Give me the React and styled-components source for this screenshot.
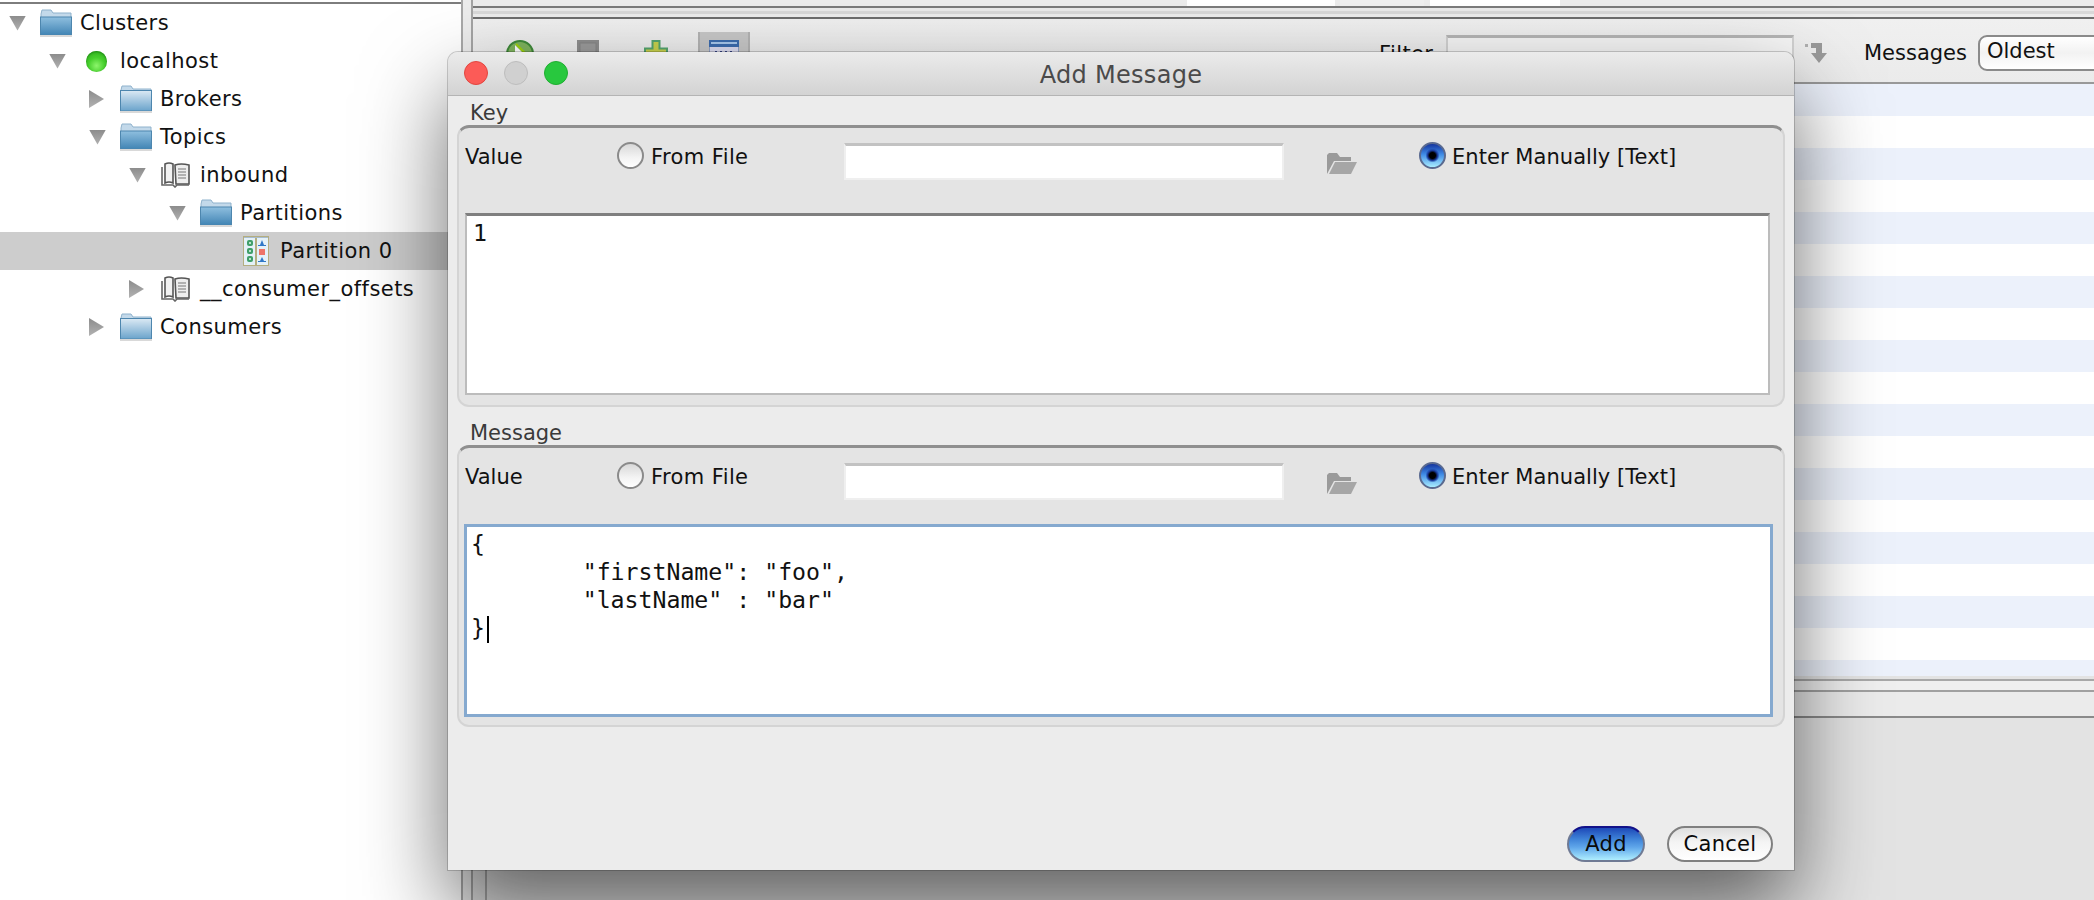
import styled, { createGlobalStyle } from 'styled-components';

const treeRows = [
	{ depth: 0, arrow: 'down', icon: 'folderOpen', label: 'Clusters' },
	{ depth: 1, arrow: 'down', icon: 'ball', label: 'localhost' },
	{ depth: 2, arrow: 'right', icon: 'folder', label: 'Brokers' },
	{ depth: 2, arrow: 'down', icon: 'folderOpen', label: 'Topics' },
	{ depth: 3, arrow: 'down', icon: 'book', label: 'inbound' },
	{ depth: 4, arrow: 'down', icon: 'folderOpen', label: 'Partitions' },
	{ depth: 5, icon: 'partition', label: 'Partition 0', selected: true },
	{ depth: 3, arrow: 'right', icon: 'book', label: '__consumer_offsets' },
	{ depth: 2, arrow: 'right', icon: 'folder', label: 'Consumers' },
];

const tableRows = Array.from({ length: 19 }, (_, i) => i);

const FolderIcon = ({ open }) => {
	const id = open ? 'folderOpenFill' : 'folderFill';
	return (
		<svg width='32' height='28' viewBox='0 0 32 28'>
			<defs>
				<linearGradient id={id} x1='0' y1='0' x2='0' y2='1'>
					<stop offset='0' stopColor={open ? '#8fbfdf' : '#dbe9f4'} />
					<stop offset='1' stopColor={open ? '#4184b4' : '#6aa3cb'} />
				</linearGradient>
			</defs>
			<path d='M1 5 L2 1 H11 L13 4 H31 V10 H1 Z' fill='#c3d9ea' stroke='#8fb2cc' strokeWidth='1' />
			<rect x='0.5' y={open ? 8 : 5.5} width='31' height={open ? 18 : 20.5} fill={`url(#${id})`} stroke='#4d86ae' strokeWidth='1' />
			<rect x='0' y='26' width='32' height='2' fill='#d9d9d9' />
		</svg>
	);
};

const BookIcon = () => (
	<svg width='30' height='26' viewBox='0 0 30 26'>
		<path d='M4 2 Q8 0 12 2 V21 Q8 19 4 21 Z' fill='#f2f2f2' stroke='#555' strokeWidth='1.6' />
		<path d='M14 3 Q20 1 28 3 V22 H15 Z' fill='#eeeeee' stroke='#555' strokeWidth='1.6' />
		<path d='M17 7 H25 M17 10 H25 M17 13 H25 M17 16 H25' stroke='#777' strokeWidth='1.2' />
		<path d='M1 5 V23 H12 L14 25 L16 23 H28' fill='none' stroke='#666' strokeWidth='1.6' />
	</svg>
);

const PartitionIcon = () => (
	<svg width='26' height='30' viewBox='0 0 26 30'>
		<rect x='0.5' y='0.5' width='25' height='29' fill='#e4f1f8' stroke='#b4ae80' />
		<rect x='12' y='1' width='2' height='28' fill='#b4ae80' />
		<rect x='1' y='1' width='24' height='1' fill='#a7bcd0' />
		{[4, 12, 20].map(y => (
			<g key={y}>
				<rect x='4' y={y} width='6' height='6' rx='2' fill='#3f9f6a' />
				<rect x='6' y={y + 2} width='2' height='2' fill='#b9e2c9' />
			</g>
		))}
		<path d='M19 4 L21 9 H23 V10 H15 V9 H17 Z' fill='#2f78c8' />
		<rect x='16' y='13' width='6' height='6' fill='#ee7468' />
		<path d='M19 21 L21 25 H23 V26 H15 V25 H17 Z' fill='#2f78c8' />
	</svg>
);

const TreeIcon = ({ type }) => {
	if (type === 'folder') return <FolderIcon />;
	if (type === 'folderOpen') return <FolderIcon open />;
	if (type === 'ball') return <Ball />;
	if (type === 'book') return <BookIcon />;
	return <PartitionIcon />;
};

const OpenFolderGlyph = () => (
	<svg width='31' height='23' viewBox='0 0 31 23'>
		<path d='M1 22 V3 L3 1 H11 L14 5 H25 V9 H8 L1 22 Z' fill='#9a9a9a' />
		<path d='M3 22 L9 10 H31 L25 22 Z' fill='#a6a6a6' />
	</svg>
);

const ArrowGlyph = () => (
	<svg width='26' height='22' viewBox='0 0 26 22'>
		<path d='M1 2 H4 V5 H1 Z' fill='#b0b0b0' />
		<path d='M7 1 H18 V11 H23 L15 21 L7 11 H12 V6 H7 Z' fill='#9a9a9a' />
	</svg>
);

const RunGlyph = () => (
	<svg width='28' height='28' viewBox='0 0 28 28'>
		<circle cx='14' cy='14' r='13' fill='#7fb55f' stroke='#3f8a3a' strokeWidth='2' />
		<path d='M9 5 L23 19 L9 23 Z' fill='#ffffff' />
		<path d='M10 4 L24 18' stroke='#9ed10e' strokeWidth='2' />
	</svg>
);

const StopGlyph = () => (
	<svg width='22' height='22' viewBox='0 0 22 22'>
		<rect x='0' y='0' width='22' height='22' fill='#8f8f8f' />
		<rect x='3' y='3' width='16' height='16' fill='#9c9c9c' stroke='#868686' />
	</svg>
);

const AddGlyph = () => (
	<svg width='24' height='24' viewBox='0 0 24 24'>
		<path d='M8.5 1 H15.5 V8.5 H23 V15.5 H15.5 V23 H8.5 V15.5 H1 V8.5 H8.5 Z' fill='#c9d24e' stroke='#55a56f' strokeWidth='2' />
	</svg>
);

const WindowGlyph = () => (
	<svg width='30' height='26' viewBox='0 0 30 26'>
		<rect x='0' y='0' width='30' height='26' fill='#dcdcf0' stroke='#4a6a9e' />
		<rect x='0' y='0' width='30' height='7' fill='#3c6cae' />
		<rect x='2' y='2' width='26' height='2' fill='#a8c8ec' />
		{[6, 11, 16, 21].map(x => (
			<rect key={x} x={x} y='11' width='2' height='2' fill='#3a4a8e' />
		))}
	</svg>
);

const ValueFields = () => (
	<ValueRow>
		<ValueLabel>Value</ValueLabel>
		<FileOption>
			<Radio />
			<OptionText>From File</OptionText>
		</FileOption>
		<PathInput />
		<BrowseSlot>
			<OpenFolderGlyph />
		</BrowseSlot>
		<ManualOption>
			<Radio $checked />
			<OptionText $tight>Enter Manually [Text]</OptionText>
		</ManualOption>
	</ValueRow>
);

const App = () => (
	<Page>
		<GlobalStyle />
		<TreePane>
			{treeRows.map(row => (
				<TreeRow key={row.label} $selected={row.selected} $depth={row.depth}>
					<ArrowBox>{row.arrow && <Arrow $dir={row.arrow} />}</ArrowBox>
					<IconBox>
						<TreeIcon type={row.icon} />
					</IconBox>
					<TreeLabel>{row.label}</TreeLabel>
				</TreeRow>
			))}
		</TreePane>
		<RightPane>
			<TabStrip>
				<Tab $left={714} $width={148} />
				<Tab $active $left={5} $width={84} />
				<Tab $left={6} $width={130} />
			</TabStrip>
			<HeaderBand />
			<Toolbar>
				<ToolButton><RunGlyph /></ToolButton>
				<ToolButton><StopGlyph /></ToolButton>
				<ToolButton><AddGlyph /></ToolButton>
				<ToolButton $active><WindowGlyph /></ToolButton>
				<FilterLabel>Filter</FilterLabel>
				<FilterInput />
				<ArrowSlot><ArrowGlyph /></ArrowSlot>
				<MessagesLabel>Messages</MessagesLabel>
				<Combo>Oldest</Combo>
			</Toolbar>
			<Table>
				{tableRows.map(i => (
					<TableRow key={i} $odd={i % 2 === 1} />
				))}
			</Table>
			<FooterBands />
			<StatusBand />
			<LowerPane>
				<LowerInner />
			</LowerPane>
		</RightPane>

		<Dialog>
			<TitleBar>
				<Lights>
					<Light $color='#fc5b57' $edge='#e2463f' />
					<Light $color='#d0d0d0' $edge='#bdbdbd' />
					<Light $color='#28c83e' $edge='#1fae31' />
				</Lights>
				<Title>Add Message</Title>
			</TitleBar>
			<Section>
				<Legend>Key</Legend>
				<Panel>
					<ValueFields />
					<Editor>1</Editor>
				</Panel>
			</Section>
			<Section $second>
				<Legend>Message</Legend>
				<Panel>
					<ValueFields />
					<Editor $focused>
						{'{\n\t"firstName": "foo",\n\t"lastName" : "bar"\n}'}
						<Caret />
					</Editor>
				</Panel>
			</Section>
			<Footer>
				<DefaultButton>Add</DefaultButton>
				<PlainButton>Cancel</PlainButton>
			</Footer>
		</Dialog>
	</Page>
);

const GlobalStyle = createGlobalStyle`
	html, body {
		margin: 0;
		padding: 0;
		overflow: hidden;
	}
	body {
		font-family: 'DejaVu Sans', 'Liberation Sans', sans-serif;
		font-size: 21px;
	}
`;

const Page = styled.div`
	position: relative;
	display: flex;
	width: 2094px;
	height: 900px;
	overflow: hidden;
	background: #ececec;
`;

const TreePane = styled.div`
	box-sizing: border-box;
	flex: 0 0 463px;
	height: 900px;
	margin-right: 8px;
	padding-top: 4px;
	background: #ffffff;
	border-right: 2px solid #a8a8a8;
	box-shadow: inset 0 2px 0 #ffffff, inset 0 4px 0 #7d7d7d;
`;

const TreeRow = styled.div`
	display: flex;
	align-items: center;
	height: 38px;
	padding-left: ${props => props.$depth * 40 + 8}px;
	background: ${props => (props.$selected ? '#cdcdcd' : 'transparent')};
`;

const ArrowBox = styled.div`
	display: flex;
	flex: 0 0 32px;
	align-items: center;
	box-sizing: border-box;
	padding-left: 1px;
`;

const Arrow = styled.div`
	width: ${props => (props.$dir === 'down' ? '17px' : '15px')};
	height: ${props => (props.$dir === 'down' ? '15px' : '18px')};
	background: linear-gradient(#8c8c8c, #b2b2b2);
	clip-path: ${props =>
		props.$dir === 'down'
			? 'polygon(0 0, 100% 0, 50% 100%)'
			: 'polygon(0 0, 100% 50%, 0 100%)'};
`;

const IconBox = styled.div`
	display: flex;
	flex: 0 0 32px;
	align-items: center;
	justify-content: center;
	margin-right: 8px;
`;

const Ball = styled.div`
	width: 21px;
	height: 21px;
	background: radial-gradient(circle at 50% 70%, #8df56c 0%, #46cf2c 45%, #2aa61b 100%);
	border-radius: 50%;
	box-shadow: inset 0 1px 2px #1f8a14;
`;

const TreeLabel = styled.span`
	color: #111111;
	font-size: 21px;
	letter-spacing: 0.45px;
	white-space: nowrap;
`;

const RightPane = styled.div`
	display: flex;
	flex: 1;
	flex-direction: column;
	box-sizing: border-box;
	height: 900px;
	min-width: 0;
	overflow: hidden;
	border-left: 2px solid #a4a4a4;
`;

const TabStrip = styled.div`
	display: flex;
	flex: 0 0 6px;
	box-sizing: border-box;
	border-bottom: 2px solid #7a7a7a;
`;

const Tab = styled.div`
	width: ${props => props.$width}px;
	height: 6px;
	margin-left: ${props => props.$left}px;
	background: ${props => (props.$active ? '#efefef' : '#ffffff')};
`;

const HeaderBand = styled.div`
	flex: 0 0 11px;
	box-sizing: border-box;
	background: linear-gradient(#e9e9e9 0 3px, #d8d8d8 3px 6px, #ececec 6px);
	border-bottom: 2px solid #6e6e6e;
`;

const Toolbar = styled.div`
	display: flex;
	flex: 0 0 65px;
	align-items: flex-start;
	box-sizing: border-box;
	padding: 16px 0 0 21px;
	background: linear-gradient(#f0f0f0, #ebebeb);
	border-bottom: 2px solid #999999;
`;

const ToolButton = styled.div`
	display: flex;
	flex: 0 0 52px;
	justify-content: center;
	box-sizing: border-box;
	height: 40px;
	margin-top: -3px;
	margin-right: 16px;
	padding-top: 8px;
	background: ${props => (props.$active ? '#c8c8c8' : 'transparent')};
	border-left: ${props => (props.$active ? '2px solid #b4b4b4' : 'none')};
	border-right: ${props => (props.$active ? '2px solid #b4b4b4' : 'none')};
`;

const FilterLabel = styled.span`
	flex: 0 0 60px;
	margin: 7px 7px 0 613px;
	color: #111111;
	letter-spacing: 0.4px;
	line-height: 24px;
`;

const FilterInput = styled.div`
	flex: 0 0 348px;
	box-sizing: border-box;
	height: 36px;
	background: #f6f6f6;
	border-top: 3px solid #b5b5b5;
	border-right: 2px solid #d2d2d2;
	border-left: 2px solid #d2d2d2;
`;

const ArrowSlot = styled.div`
	flex: 0 0 26px;
	margin: 7px 0 0 10px;
`;

const MessagesLabel = styled.span`
	flex: 0 0 auto;
	margin: 5px 11px 0 34px;
	color: #111111;
	line-height: 26px;
`;

const Combo = styled.div`
	flex: 0 0 180px;
	box-sizing: border-box;
	height: 36px;
	padding-left: 7px;
	color: #111111;
	font-size: 21px;
	line-height: 29px;
	background: linear-gradient(#ffffff, #f2f2f2 50%, #ffffff);
	border: 2px solid #8a8a8a;
	border-radius: 9px 0 0 9px;
`;

const Table = styled.div`
	flex: 0 0 592px;
	overflow: hidden;
	background: #ffffff;
`;

const TableRow = styled.div`
	height: 32px;
	background: ${props => (props.$odd ? '#ffffff' : '#ecf1fb')};
`;

const FooterBands = styled.div`
	flex: 0 0 16px;
	box-sizing: border-box;
	background: linear-gradient(#e3e3e3 0 3px, #a8a8a8 3px 5px, #efefef 5px 14px, #a0a0a0 14px);
`;

const StatusBand = styled.div`
	flex: 0 0 26px;
	box-sizing: border-box;
	background: #ebebeb;
	border-bottom: 2px solid #8a8a8a;
`;

const LowerPane = styled.div`
	flex: 1;
	padding-left: 12px;
	background: #e3e3e3;
`;

const LowerInner = styled.div`
	height: 100%;
	border-left: 2px solid #a9a9a9;
`;

const Dialog = styled.div`
	position: absolute;
	top: 52px;
	left: 448px;
	display: flex;
	flex-direction: column;
	box-sizing: border-box;
	width: 1346px;
	height: 818px;
	background: #ececec;
	border-radius: 10px 10px 0 0;
	box-shadow: 0 0 0 1px rgba(0, 0, 0, 0.18), 0 40px 85px rgba(0, 0, 0, 0.58);
`;

const TitleBar = styled.div`
	position: relative;
	display: flex;
	flex: 0 0 44px;
	align-items: center;
	justify-content: center;
	box-sizing: border-box;
	padding-top: 2px;
	background: linear-gradient(#ebebeb, #d3d3d3);
	border-bottom: 1px solid #b4b4b4;
	border-radius: 10px 10px 0 0;
`;

const Lights = styled.div`
	position: absolute;
	top: 9px;
	left: 16px;
	display: flex;
	gap: 16px;
`;

const Light = styled.div`
	box-sizing: border-box;
	width: 24px;
	height: 24px;
	background: ${props => props.$color};
	border: 1px solid ${props => props.$edge};
	border-radius: 50%;
`;

const Title = styled.span`
	color: #4a4a4a;
	font-size: 24px;
	letter-spacing: 0.3px;
`;

const Section = styled.div`
	margin: ${props => (props.$second ? '9px' : '0')} 9px 0;
`;

const Legend = styled.div`
	height: 29px;
	padding-left: 13px;
	color: #3a3a3a;
	font-size: 21px;
	line-height: 34px;
`;

const Panel = styled.div`
	box-sizing: border-box;
	height: 282px;
	padding: 14px 7px 0 6px;
	background: #e4e4e4;
	border: 2px solid #d4d4d4;
	border-top: 3px solid #8f8f8f;
	border-radius: 12px;
`;

const ValueRow = styled.div`
	display: flex;
	height: 38px;
`;

const ValueLabel = styled.span`
	flex: 0 0 152px;
	color: #111111;
	line-height: 30px;
`;

const FileOption = styled.div`
	display: flex;
	flex: 0 0 227px;
	gap: 7px;
`;

const ManualOption = styled.div`
	display: flex;
	gap: 6px;
	margin-left: 62px;
`;

const OptionText = styled.span`
	color: #111111;
	letter-spacing: ${props => (props.$tight ? '0.05px' : '0.4px')};
	line-height: 30px;
	white-space: nowrap;
`;

const Radio = styled.div`
	box-sizing: border-box;
	width: 27px;
	height: 27px;
	background: ${props =>
		props.$checked
			? 'radial-gradient(circle at 50% 50%, #000000 0 3px, #1a3a9a 5px, transparent 7px), linear-gradient(#15359f, #3f8be6 45%, #a8ecff)'
			: 'linear-gradient(#d8d8d8, #f4f4f4 60%, #ffffff)'};
	border: 2px solid ${props => (props.$checked ? '#5a6a90' : '#8a8a8a')};
	border-radius: 50%;
`;

const PathInput = styled.div`
	flex: 0 0 440px;
	box-sizing: border-box;
	height: 37px;
	margin-top: 1px;
	background: #ffffff;
	border-top: 3px solid #c2c2c2;
	border-right: 2px solid #efefef;
	border-bottom: 2px solid #efefef;
	border-left: 2px solid #efefef;
`;

const BrowseSlot = styled.div`
	flex: 0 0 31px;
	margin: 10px 0 0 42px;
`;

const Editor = styled.pre`
	box-sizing: border-box;
	width: ${props => (props.$focused ? '1309px' : '1305px')};
	height: ${props => (props.$focused ? '193px' : '182px')};
	margin: ${props => (props.$focused ? '24px 0 0 -1px' : '33px 0 0 0')};
	padding: ${props => (props.$focused ? '3px 0 0 4px' : '3px 0 0 6px')};
	color: #111111;
	font-family: 'DejaVu Sans Mono', 'Liberation Mono', monospace;
	font-size: 23.2px;
	line-height: 28px;
	background: #ffffff;
	border: ${props => (props.$focused ? '3px solid #85a9cf' : '2px solid #bcbcbc')};
	border-top: ${props => (props.$focused ? '3px solid #85a9cf' : '3px solid #7f7f7f')};
	tab-size: 8;
`;

const Caret = styled.span`
	display: inline-block;
	width: 2px;
	height: 27px;
	margin-left: 2px;
	vertical-align: middle;
	background: #000000;
`;

const Footer = styled.div`
	display: flex;
	flex: 1;
	align-items: flex-end;
	justify-content: flex-end;
	gap: 22px;
	padding: 0 21px 8px 0;
`;

const DefaultButton = styled.div`
	box-sizing: border-box;
	width: 78px;
	height: 36px;
	color: #0a0a0a;
	font-size: 21px;
	letter-spacing: 0.3px;
	line-height: 33px;
	text-align: center;
	background: linear-gradient(#1d49b8, #3f83d8 35%, #5fa6ea 60%, #aeeeff);
	border: 2px solid #6f7a94;
	border-top-color: #12128a;
	border-radius: 18px;
`;

const PlainButton = styled.div`
	box-sizing: border-box;
	width: 106px;
	height: 36px;
	color: #0a0a0a;
	font-size: 21px;
	letter-spacing: 0.3px;
	line-height: 33px;
	text-align: center;
	background: linear-gradient(#dfdfdf, #f4f4f4 45%, #ffffff);
	border: 2px solid #808080;
	border-radius: 18px;
`;

export default App;
